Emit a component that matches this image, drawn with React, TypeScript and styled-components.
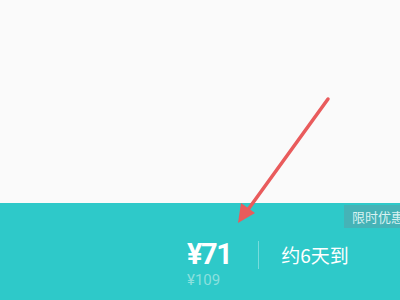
import React from "react";
import styled, { createGlobalStyle } from "styled-components";

const Global = createGlobalStyle`
  html, body { margin: 0; padding: 0; }
  body { width: 400px; height: 300px; overflow: hidden; font-family: "Roboto", "Noto Sans CJK SC", sans-serif; }
`;

const Page = styled.div`
  position: relative;
  width: 400px;
  height: 300px;
  display: flex;
  flex-direction: column;
`;

const Top = styled.div`
  height: 203px;
  background: #fafafa;
`;

const Band = styled.div`
  position: relative;
  flex: 1;
  background: #2ec9c9;
  display: flex;
  align-items: flex-start;
  padding: 36px 0 0 187px;
`;

const Badge = styled.div`
  position: absolute;
  top: 2px;
  right: -14px;
  height: 23px;
  padding: 0 10px 0 8px;
  background: #45b3b7;
  color: #d9f2f2;
  font-family: "Noto Sans CJK SC", sans-serif;
  font-size: 13px;
  line-height: 23px;
  white-space: nowrap;
`;

const PriceCol = styled.div`
  display: flex;
  flex-direction: column;
`;

const Price = styled.div`
  color: #ffffff;
  font-family: "Roboto", "Liberation Sans", sans-serif;
  font-weight: 700;
  font-size: 29px;
  line-height: 30px;
  letter-spacing: -1.5px;
`;

const OldPrice = styled.div`
  color: #8be0de;
  font-family: "Roboto", "Liberation Sans", sans-serif;
  font-size: 15px;
  line-height: 16px;
  margin-top: 3px;
`;

const Divider = styled.div`
  width: 1px;
  height: 28px;
  margin: 2px 22px 0 27px;
  background: rgba(255, 255, 255, 0.35);
`;

const Delivery = styled.div`
  color: #ffffff;
  font-family: "Noto Sans CJK SC", sans-serif;
  font-size: 19px;
  line-height: 30px;
  margin-top: 1px;
`;

const Arrow = styled.svg`
  position: absolute;
  left: 0;
  top: 0;
  pointer-events: none;
`;

export default function App() {
  return (
    <>
      <Global />
      <Page>
        <Top />
        <Band>
          <Badge>限时优惠</Badge>
          <PriceCol>
            <Price>¥71</Price>
            <OldPrice>¥109</OldPrice>
          </PriceCol>
          <Divider />
          <Delivery>约6天到</Delivery>
        </Band>
        <Arrow width="400" height="300" viewBox="0 0 400 300">
          <line x1="328" y1="99" x2="247" y2="211" stroke="#e95b5c" strokeWidth="3.5" strokeLinecap="round" />
          <polygon points="238,223 241,203 255,213" fill="#e95b5c" />
        </Arrow>
      </Page>
    </>
  );
}
